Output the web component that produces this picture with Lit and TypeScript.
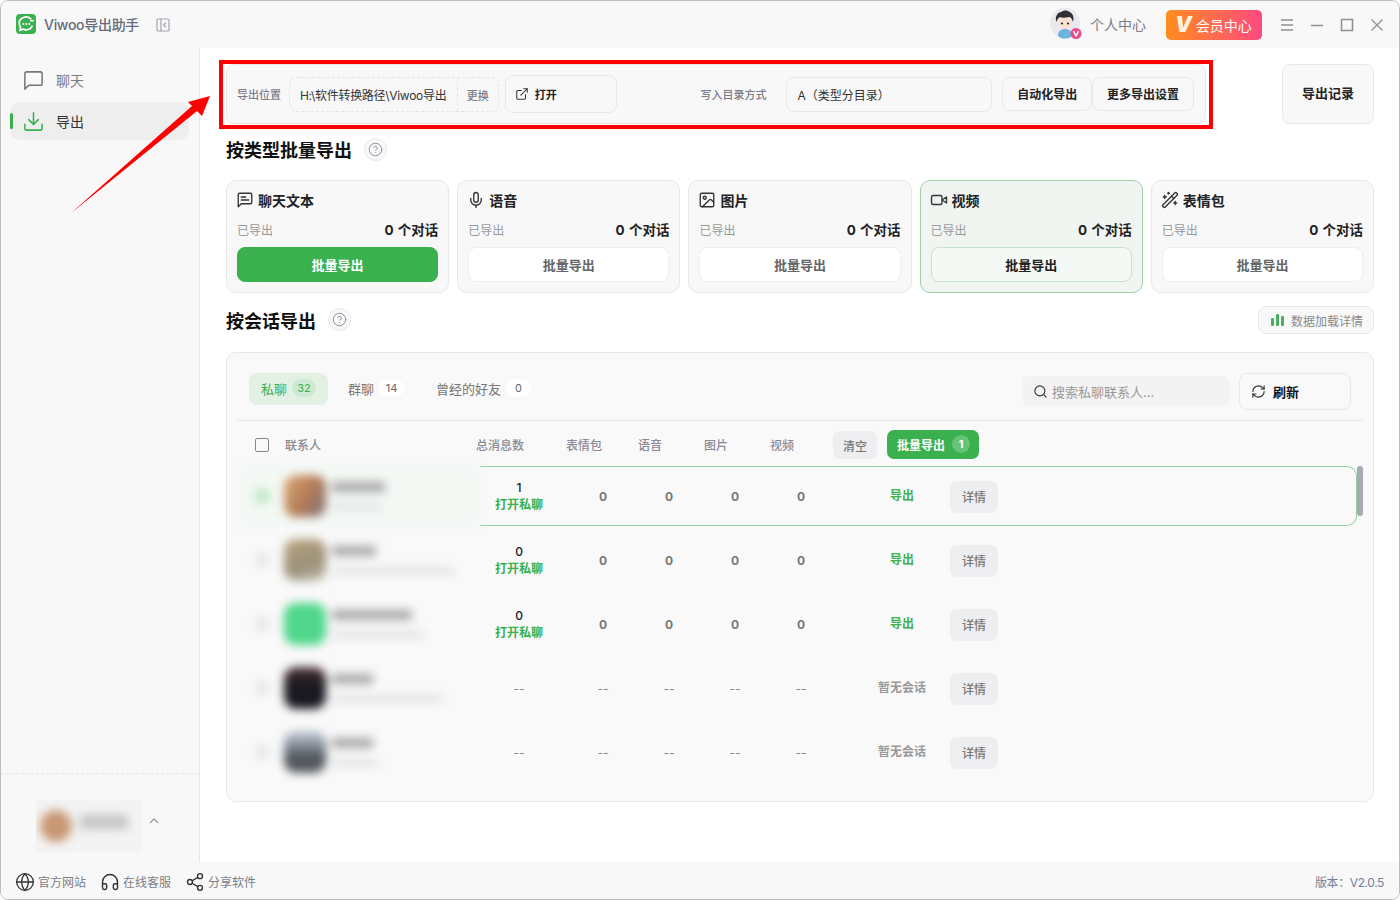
import { LitElement, html, css, svg } from 'lit';
import { customElement } from 'lit/decorators.js';

const icons = {
  chat: svg`<path d="M21 15a2 2 0 0 1-2 2H7l-4 4V5a2 2 0 0 1 2-2h14a2 2 0 0 1 2 2z"/>`,
  download: svg`<path d="M21 15v4a2 2 0 0 1-2 2H5a2 2 0 0 1-2-2v-4"/><path d="m7 10 5 5 5-5"/><path d="M12 15V3"/>`,
  text: svg`<path d="M21 15a2 2 0 0 1-2 2H7l-4 4V5a2 2 0 0 1 2-2h14a2 2 0 0 1 2 2z"/><path d="M13 8H7"/><path d="M17 12H7"/>`,
  mic: svg`<path d="M12 2a3 3 0 0 0-3 3v7a3 3 0 0 0 6 0V5a3 3 0 0 0-3-3Z"/><path d="M19 10v2a7 7 0 0 1-14 0v-2"/><path d="M12 19v3"/>`,
  image: svg`<rect x="3" y="3" width="18" height="18" rx="2"/><circle cx="9" cy="9" r="2"/><path d="m21 15-3.086-3.086a2 2 0 0 0-2.828 0L6 21"/>`,
  video: svg`<path d="m22 8-6 4 6 4V8Z"/><rect x="2" y="6" width="14" height="12" rx="2"/>`,
  wand: svg`<path d="m21.64 3.64-1.28-1.28a1.21 1.21 0 0 0-1.72 0L2.36 18.64a1.21 1.21 0 0 0 0 1.72l1.28 1.28a1.2 1.2 0 0 0 1.72 0L21.64 5.36a1.2 1.2 0 0 0 0-1.72"/><path d="m14 7 3 3"/><path d="M5 6v4"/><path d="M19 14v4"/><path d="M10 2v2"/><path d="M7 8H3"/><path d="M21 16h-4"/><path d="M11 3H9"/>`,
  link: svg`<path d="M15 3h6v6"/><path d="M10 14 21 3"/><path d="M18 13v6a2 2 0 0 1-2 2H5a2 2 0 0 1-2-2V8a2 2 0 0 1 2-2h6"/>`,
  search: svg`<circle cx="11" cy="11" r="8"/><path d="m21 21-4.3-4.3"/>`,
  refresh: svg`<path d="M3 12a9 9 0 0 1 9-9 9.75 9.75 0 0 1 6.74 2.74L21 8"/><path d="M21 3v5h-5"/><path d="M21 12a9 9 0 0 1-9 9 9.75 9.75 0 0 1-6.74-2.74L3 16"/><path d="M8 16H3v5"/>`,
  globe: svg`<circle cx="12" cy="12" r="10"/><path d="M12 2a14.5 14.5 0 0 0 0 20 14.5 14.5 0 0 0 0-20"/><path d="M2 12h20"/>`,
  headphones: svg`<path d="M3 14h3a2 2 0 0 1 2 2v3a2 2 0 0 1-2 2H5a2 2 0 0 1-2-2v-7a9 9 0 0 1 18 0v7a2 2 0 0 1-2 2h-1a2 2 0 0 1-2-2v-3a2 2 0 0 1 2-2h3"/>`,
  share: svg`<circle cx="18" cy="5" r="3"/><circle cx="6" cy="12" r="3"/><circle cx="18" cy="19" r="3"/><path d="m8.59 13.51 6.83 3.98"/><path d="m15.41 6.51-6.82 3.98"/>`,
  help: svg`<circle cx="12" cy="12" r="10"/><path d="M9.09 9a3 3 0 0 1 5.83 1c0 2-3 3-3 3"/><path d="M12 17h.01"/>`,
  collapse: svg`<rect x="3" y="3" width="18" height="18" rx="2"/><path d="M9 3v18"/><path d="m16 15-3-3 3-3"/>`,
};

const ico = (name: keyof typeof icons, size: number, color = 'currentColor', sw = 2) => html`
  <svg class="ico" width=${size} height=${size} viewBox="0 0 24 24" fill="none" stroke=${color}
    stroke-width=${sw} stroke-linecap="round" stroke-linejoin="round">${icons[name]}</svg>
`;

const typeCards = [
  { icon: 'text', name: '聊天文本', state: 'primary' },
  { icon: 'mic', name: '语音', state: '' },
  { icon: 'image', name: '图片', state: '' },
  { icon: 'video', name: '视频', state: 'hover' },
  { icon: 'wand', name: '表情包', state: '' },
] as const;

const contacts = [
  { avatar: 'linear-gradient(120deg,#e0ab78,#b07a55 55%,#7d7480)', name: 53, sub: 48, msgs: '1', has: true, selected: true },
  { avatar: 'linear-gradient(160deg,#b7a57e,#9c9078 60%,#c3c0b4)', name: 44, sub: 122, msgs: '0', has: true },
  { avatar: '#4fd68b', name: 80, sub: 92, msgs: '0', has: true },
  { avatar: 'linear-gradient(180deg,#4a3034,#1a1820 45%)', name: 41, sub: 110, msgs: '--', has: false },
  { avatar: 'linear-gradient(180deg,#c4cede,#4d5358 65%,#5c6064)', name: 41, sub: 46, msgs: '--', has: false },
];

@customElement('app-root')
export class AppRoot extends LitElement {
  static styles = css`
    :host {
      display: block;
      width: 1400px;
      height: 900px;
      font-family: Inter, 'Noto Sans CJK SC', sans-serif;
      background: #fff;
    }
    * { box-sizing: border-box; }
    .ico { display: block; flex: none; }
    .window {
      position: relative;
      width: 1400px;
      height: 900px;
      display: flex;
      flex-direction: column;
      border: 1px solid #bdbdbd;
      border-radius: 8px;
      overflow: hidden;
      background: #fff;
    }

    .titlebar {
      height: 47px;
      flex: none;
      background: #f8f8f9;
      display: flex;
      align-items: center;
      padding: 0 15px;
    }
    .logo {
      width: 20px;
      height: 20px;
      margin-top: -1px;
    }
    .app-name {
      margin-left: 8px;
      font-size: 14px;
      color: #666b78;
      font-weight: 500;
      letter-spacing: -0.3px;
      padding-bottom: 1px;
    }
    .collapse { margin-left: 16px; color: #a3a3af; }
    .spacer { flex: 1; }
    .profile {
      display: flex;
      align-items: center;
      gap: 8px;
      font-size: 14px;
      color: #7d7d85;
      padding-bottom: 1px;
    }
    .avatar { width: 32px; height: 32px; }
    .vip {
      margin-left: 20px;
      width: 96px;
      height: 30px;
      border-radius: 5px;
      background: linear-gradient(90deg, #ff8c1e, #ff4a80);
      color: #fff;
      font-size: 14px;
      display: flex;
      align-items: center;
      padding-left: 9px;
      gap: 4px;
    }
    .vip b {
      font-size: 21px;
      font-style: italic;
      font-weight: 900;
      line-height: 1;
      color: #fff2df;
    }
    .winbtns {
      margin-left: 18px;
      display: flex;
      align-items: center;
      gap: 16px;
      color: #8f8f8f;
    }
    .winbtns svg { display: block; }

    .body { flex: 1; display: flex; min-height: 0; }
    .sidebar {
      width: 199px;
      flex: none;
      background: #f8f8f9;
      border-right: 1px solid #e8e8e8;
      display: flex;
      flex-direction: column;
      padding-top: 12px;
    }
    .nav {
      height: 40px;
      margin: 0 10px 2px 9px;
      display: flex;
      align-items: center;
      gap: 11px;
      padding-left: 12px;
      border-radius: 10px;
      font-size: 14px;
      color: #7b7b85;
      position: relative;
    }
    .nav.on { height: 38px; background: #eeeeee; color: #333; }
    .nav.on::before {
      content: '';
      position: absolute;
      left: 0;
      top: 11px;
      width: 3px;
      height: 16px;
      background: #3ab04f;
      border-radius: 2px;
    }
    .user {
      margin-top: auto;
      border-top: 1px dashed #e6e6e6;
      height: 89px;
      padding: 26px 0 0 35px;
      display: flex;
      gap: 7px;
    }
    .user-blur {
      width: 106px;
      height: 52px;
      overflow: hidden;
      display: flex;
      align-items: center;
      gap: 8px;
      padding-left: 4px;
      background: #f3f3f3;
    }
    .user-blur i {
      display: block;
      filter: blur(5px);
    }
    .user-pic { width: 32px; height: 32px; border-radius: 50%; background: #c99874; }
    .user-name { width: 48px; height: 14px; background: #c4c4c4; margin-top: -8px; }
    .chev { margin-top: 16px; color: #9a9aa6; }

    .main { flex: 1; min-width: 0; padding: 16px 25px 0 26px; }
    .toprow { display: flex; justify-content: space-between; }
    .toolbar {
      width: 980px;
      height: 60px;
      display: flex;
      align-items: center;
      background: #f8f8f9;
      border: 1px solid #e8e8e8;
      border-radius: 8px;
      padding: 0 11px 0 10px;
    }
    .lbl { font-size: 11px; color: #7b7b88; font-weight: 500; white-space: nowrap; }
    .path {
      margin-left: 8px;
      width: 210px;
      height: 35px;
      border: 1px dashed #e4e4e4;
      border-radius: 8px;
      display: flex;
      align-items: center;
      font-size: 12px;
      color: #333;
    }
    .path span:first-child {
      width: 167px;
      padding-left: 10px;
      white-space: nowrap;
      letter-spacing: -0.3px;
    }
    .path .change {
      flex: 1;
      height: 100%;
      border-left: 1px dashed #e4e4e4;
      display: flex;
      align-items: center;
      justify-content: center;
      font-size: 11px;
      font-weight: 500;
      color: #7b7b88;
      padding-top: 2px;
    }
    .open {
      margin-left: 6px;
      width: 112px;
      height: 38px;
      border: 1px solid #e8e8e8;
      border-radius: 8px;
      display: flex;
      align-items: center;
      gap: 6px;
      padding-left: 9px;
      font-size: 11px;
      font-weight: 700;
      color: #222;
    }
    .lbl.write { margin-left: 84px; }
    .select {
      margin-left: 19px;
      width: 207px;
      height: 35px;
      border: 1px solid #e8e8e8;
      border-radius: 8px;
      display: flex;
      align-items: center;
      padding-left: 11px;
      font-size: 12px;
      color: #333;
    }
    .tbtn {
      height: 34px;
      border: 1px solid #e8e8e8;
      border-radius: 8px;
      display: flex;
      align-items: center;
      justify-content: center;
      font-size: 12px;
      font-weight: 700;
      color: #222;
      white-space: nowrap;
      padding-bottom: 2px;
    }
    .tbtn.auto { margin-left: 10px; width: 90px; }
    .tbtn.more { width: 102px; }
    .record {
      width: 92px;
      height: 60px;
      background: #f8f8f9;
      border: 1px solid #e8e8e8;
      border-radius: 8px;
      display: flex;
      align-items: center;
      justify-content: center;
      font-size: 13px;
      font-weight: 700;
      color: #222;
      padding-bottom: 3px;
    }

    .section {
      height: 24px;
      margin-top: 13px;
      margin-bottom: 19px;
      display: flex;
      align-items: center;
      gap: 12px;
      font-size: 18px;
      font-weight: 700;
      color: #111;
    }
    .section.second { height: 28px; margin-top: 13px; margin-bottom: 18px; }
    .section.second .helpbtn { margin-top: -2px; }
    .helpbtn {
      width: 23px;
      height: 23px;
      border-radius: 50%;
      border: 1px solid #e8e8ec;
      background: #f8f8f9;
      display: flex;
      align-items: center;
      justify-content: center;
      color: #8f8fa0;
    }
    .load {
      margin-left: auto;
      width: 116px;
      height: 28px;
      border: 1px solid #e8e8e8;
      border-radius: 8px;
      background: #f8f8f9;
      display: flex;
      align-items: center;
      gap: 7px;
      padding-left: 12px;
      font-size: 12px;
      font-weight: 400;
      color: #888;
      white-space: nowrap;
    }
    .bars { display: flex; align-items: flex-end; gap: 2px; height: 12px; }
    .bars i { display: block; width: 3px; background: #4caf5f; border-radius: 1px; }

    .cards { display: grid; grid-template-columns: repeat(5, 1fr); gap: 8px; }
    .card {
      height: 113px;
      background: #f8f8f9;
      border: 1px solid #e8e8e8;
      border-radius: 10px;
      padding: 10px 10px;
    }
    .card.hover { background: #f0f5f1; border-color: #9dd3a6; }
    .card-title {
      display: flex;
      align-items: center;
      gap: 4px;
      height: 18px;
      font-size: 14px;
      font-weight: 700;
      color: #222;
    }
    .card-title .ico { margin-left: -1px; }
    .card-stat {
      display: flex;
      justify-content: space-between;
      align-items: center;
      height: 18px;
      margin-top: 11px;
      font-size: 12px;
      color: #999;
    }
    .card-stat b { font-size: 13.5px; color: #222; font-weight: 700; word-spacing: 1px; }
    .card-btn {
      margin-top: 9px;
      height: 35px;
      border: 1px solid #eeeeee;
      border-radius: 8px;
      background: #fff;
      display: flex;
      align-items: center;
      justify-content: center;
      font-size: 13px;
      font-weight: 700;
      color: #666;
    }
    .card-btn.primary { background: #3ab04f; border-color: #3ab04f; color: #fff; }
    .card-btn.hover { background: #f4f9f5; border-color: #c5e3ca; color: #222; }

    .panel {
      height: 450px;
      background: #f9f9f9;
      border: 1px solid #e8e8e8;
      border-radius: 10px;
      padding: 20px 10px 0;
    }
    .tabs {
      height: 48px;
      border-bottom: 1px solid #e8e8e8;
      padding: 0 12px 10px;
      display: flex;
      align-items: flex-start;
    }
    .tab {
      height: 32px;
      padding: 0 12px 2px;
      margin-right: 8px;
      display: flex;
      align-items: center;
      gap: 5px;
      border-radius: 8px;
      font-size: 13px;
      color: #777;
    }
    .tab.on { background: #e2f1e4; color: #3ab04f; }
    .count {
      width: 25px;
      height: 18px;
      border-radius: 9px;
      background: #fff;
      color: #666;
      font-size: 11px;
      display: flex;
      align-items: center;
      justify-content: center;
    }
    .tab.on .count { width: 24px; background: #cfe9d3; color: #3ab04f; }
    .search {
      margin-left: auto;
      margin-top: 3px;
      width: 208px;
      height: 30px;
      background: #f3f3f4;
      border-radius: 8px;
      display: flex;
      align-items: center;
      gap: 4px;
      padding-left: 11px;
      font-size: 13px;
      color: #999;
    }
    .refresh {
      margin-left: 9px;
      width: 112px;
      height: 37px;
      border: 1px solid #e8e8e8;
      border-radius: 8px;
      display: flex;
      align-items: center;
      gap: 7px;
      padding-left: 11px;
      font-size: 13px;
      font-weight: 700;
      color: #111;
    }

    .thead {
      height: 45px;
      padding-top: 2px;
      display: grid;
      grid-template-columns: 224px 78px 12px repeat(4, 66px) 1fr;
      align-items: center;
      font-size: 12px;
      font-weight: 500;
      color: #8a8a96;
      text-align: center;
    }
    .thead .who { display: flex; align-items: center; gap: 16px; padding-left: 18px; }
    .check { width: 14px; height: 14px; border: 1.5px solid #85858f; border-radius: 2px; }
    .bulk-actions { display: flex; align-items: center; gap: 10px; margin-left: 18px; }
    .clear {
      width: 44px;
      height: 28px;
      margin-top: 1px;
      border-radius: 7px;
      background: #eeeef0;
      display: flex;
      align-items: center;
      justify-content: center;
      color: #777;
    }
    .bulk {
      width: 92px;
      height: 29px;
      margin-top: -1px;
      border-radius: 7px;
      background: #3ab04f;
      color: #fff;
      font-weight: 700;
      display: flex;
      align-items: center;
      gap: 7px;
      padding-left: 10px;
    }
    .bulk i {
      width: 18px;
      height: 18px;
      border-radius: 50%;
      background: #66c377;
      font-style: normal;
      font-size: 11px;
      display: flex;
      align-items: center;
      justify-content: center;
    }

    .rows {
      position: relative;
      display: flex;
      flex-direction: column;
      gap: 4px;
    }
    .thumb {
      position: absolute;
      left: 1120px;
      top: 0;
      width: 6px;
      height: 50px;
      border-radius: 3px;
      background: #a9a9b6;
    }
    .row { display: flex; width: 1120px; height: 60px; }
    .contact {
      width: 243px;
      flex: none;
      display: flex;
      align-items: center;
      overflow: hidden;
      filter: blur(5px);
    }
    .row.sel .contact { background: #f3f8f4; }
    .tick {
      width: 14px;
      height: 14px;
      margin-left: 18px;
      border-radius: 3px;
      background: #e8e8ec;
    }
    .row.sel .tick { background: #bfe6c6; }
    .face { width: 42px; height: 42px; margin-left: 15px; border-radius: 12px; flex: none; }
    .lines { margin-left: 6px; display: flex; flex-direction: column; gap: 12px; }
    .lines i { display: block; height: 10px; background: #a8a8a8; }
    .lines i + i { height: 6px; background: #dedee0; }
    .stats {
      flex: 1;
      display: grid;
      grid-template-columns: 78px 12px repeat(4, 66px) 44px 48px 24px 48px;
      align-items: center;
      text-align: center;
      font-size: 12px;
      font-weight: 700;
      color: #777;
      border: 1px solid transparent;
      border-left: 0;
      border-radius: 0 10px 10px 0;
    }
    .row.sel .stats { border-color: #93d19f; }
    .msgs { grid-column: 1; line-height: 17px; font-weight: 500; color: #222; margin-top: -1px; }
    .msgs span { display: block; color: #3ab04f; font-weight: 700; }
    .msgs.none { color: #888; font-weight: 400; margin-top: 0; }
    .num { font-weight: 700; }
    .num.none { color: #888; font-weight: 400; }
    .act { grid-column: 8; color: #3ab04f; white-space: nowrap; margin-top: -3px; }
    .act.none { color: #999; }
    .detail {
      grid-column: 10;
      height: 32px;
      margin-top: 1px;
      border-radius: 7px;
      background: #eeeef0;
      color: #777;
      display: flex;
      align-items: center;
      justify-content: center;
      font-weight: 500;
    }

    .footer {
      height: 37px;
      flex: none;
      background: #f8f8f9;
      display: flex;
      align-items: center;
      padding: 2px 15px 0 14px;
      font-size: 12px;
      color: #7d7d85;
    }
    .flink { display: flex; align-items: center; gap: 3px; margin-right: 14px; }
    .version { margin-left: auto; color: #72809a; letter-spacing: -0.4px; }

    .mark {
      position: absolute;
      left: 218px;
      top: 59px;
      width: 994px;
      height: 69px;
      border: 4px solid #ff0000;
      pointer-events: none;
    }
    .arrow { position: absolute; left: -1px; top: -1px; pointer-events: none; }
  `;

  renderCard(c: (typeof typeCards)[number]) {
    return html`
      <div class="card ${c.state === 'hover' ? 'hover' : ''}">
        <div class="card-title">${ico(c.icon, 18, '#333', 1.8)}${c.name}</div>
        <div class="card-stat"><span>已导出</span><b>0 个对话</b></div>
        <div class="card-btn ${c.state}">批量导出</div>
      </div>
    `;
  }

  renderRow(c: (typeof contacts)[number]) {
    const numCls = c.has ? 'num' : 'num none';
    const val = c.has ? '0' : '--';
    return html`
      <div class="row ${c.selected ? 'sel' : ''}">
        <div class="contact">
          <div class="tick"></div>
          <div class="face" style="background:${c.avatar}"></div>
          <div class="lines">
            <i style="width:${c.name}px"></i>
            <i style="width:${c.sub}px"></i>
          </div>
        </div>
        <div class="stats">
          <div class="msgs ${c.has ? '' : 'none'}">${c.msgs}${c.has ? html`<span>打开私聊</span>` : ''}</div>
          <div class=${numCls} style="grid-column:3">${val}</div>
          <div class=${numCls}>${val}</div>
          <div class=${numCls}>${val}</div>
          <div class=${numCls}>${val}</div>
          <div class="act ${c.has ? '' : 'none'}">${c.has ? '导出' : '暂无会话'}</div>
          <div class="detail">详情</div>
        </div>
      </div>
    `;
  }

  render() {
    return html`
      <div class="window">
        <div class="titlebar">
          <svg class="logo" viewBox="0 0 20 20">
            <rect width="20" height="20" rx="4" fill="#3ab04f"/>
            <path d="M15.300 5.600A6.600 6 0 0 0 3.400 10c0 1.300.4 2.400 1.100 3.300L4 16.200l2.900-1.100c.9.400 2 .7 3.100.7 3 0 5.500-1.700 6.300-4.300" fill="none" stroke="#fff" stroke-width="1.700"/>
            <path d="M14.200 6.800h3.600" stroke="#fff" stroke-width="1.500"/>
            <circle cx="7.300" cy="10" r="1" fill="#fff"/>
            <circle cx="10.300" cy="10" r="1" fill="#fff"/>
            <circle cx="13.300" cy="10" r="1" fill="#fff"/>
          </svg>
          <span class="app-name">Viwoo导出助手</span>
          <span class="collapse">${ico('collapse', 16, 'currentColor', 1.8)}</span>
          <span class="spacer"></span>
          <div class="profile">
            <svg class="avatar" viewBox="0 0 32 32">
              <circle cx="15" cy="15" r="15" fill="#e9e9ee"/>
              <path d="M8 28c0-5 3-7 7-7s7 2 7 7c-2 2-4 2.500-7 2.500S10 30 8 28z" fill="#6db4dc"/>
              <circle cx="15" cy="14" r="7" fill="#fbe3d3"/>
              <path d="M6.500 14c-2-5 1-10 5-10 2-2 6-2 8 0 3 1 5 5 3.500 10-1-3-2-5-4-5-3 1-7 1-9 0-2 1-3 3-3.500 5z" fill="#2f3038"/>
              <circle cx="12" cy="15.500" r="1.100" fill="#222"/>
              <circle cx="18" cy="15.500" r="1.100" fill="#222"/>
              <circle cx="26" cy="25.500" r="5.500" fill="#ea4c89"/>
              <path d="M23.500 23.200l2.500 4.800 2.500-4.800" fill="none" stroke="#fff" stroke-width="1.500"/>
            </svg>
            个人中心
          </div>
          <div class="vip"><b>V</b>会员中心</div>
          <div class="winbtns">
            <svg width="14" height="14" viewBox="0 0 14 14" stroke="currentColor" stroke-width="1.300"><path d="M1 2h12M1 7h12M1 12h12"/></svg>
            <svg width="14" height="14" viewBox="0 0 14 14" stroke="currentColor" stroke-width="1.300"><path d="M1 7.500h12"/></svg>
            <svg width="14" height="14" viewBox="0 0 14 14" stroke="currentColor" stroke-width="1.500" fill="none"><rect x="1.500" y="1.500" width="11" height="11"/></svg>
            <svg width="14" height="14" viewBox="0 0 14 14" stroke="currentColor" stroke-width="1.300"><path d="M1.500 1.500l11 11M12.500 1.500l-11 11"/></svg>
          </div>
        </div>

        <div class="body">
          <aside class="sidebar">
            <div class="nav">${ico('chat', 23, '#777', 1.6)}聊天</div>
            <div class="nav on">${ico('download', 23, '#3ab04f', 1.6)}导出</div>
            <div class="user">
              <div class="user-blur"><i class="user-pic"></i><i class="user-name"></i></div>
              <svg class="chev" width="10" height="10" viewBox="0 0 10 10" fill="none" stroke="currentColor" stroke-width="1.300"><path d="M1 7l4-4 4 4"/></svg>
            </div>
          </aside>

          <main class="main">
            <div class="toprow">
              <div class="toolbar">
                <span class="lbl">导出位置</span>
                <div class="path">
                  <span>H:\\软件转换路径\\Viwoo导出</span>
                  <span class="change">更换</span>
                </div>
                <div class="open">${ico('link', 14, '#333', 1.8)}打开</div>
                <span class="lbl write">写入目录方式</span>
                <div class="select">A（类型分目录）</div>
                <div class="tbtn auto">自动化导出</div>
                <div class="tbtn more">更多导出设置</div>
              </div>
              <div class="record">导出记录</div>
            </div>

            <div class="section">
              按类型批量导出
              <span class="helpbtn">${ico('help', 15, 'currentColor', 1.6)}</span>
            </div>
            <div class="cards">${typeCards.map((c) => this.renderCard(c))}</div>

            <div class="section second">
              按会话导出
              <span class="helpbtn">${ico('help', 15, 'currentColor', 1.6)}</span>
              <div class="load">
                <span class="bars">
                  <i style="height:8px"></i><i style="height:12px"></i><i style="height:10px"></i>
                </span>
                数据加载详情
              </div>
            </div>

            <div class="panel">
              <div class="tabs">
                <div class="tab on">私聊<span class="count">32</span></div>
                <div class="tab">群聊<span class="count">14</span></div>
                <div class="tab">曾经的好友<span class="count">0</span></div>
                <div class="search">${ico('search', 15, '#333', 1.8)}搜索私聊联系人...</div>
                <div class="refresh">${ico('refresh', 15, '#333', 1.8)}刷新</div>
              </div>
              <div class="thead">
                <div class="who"><span class="check"></span>联系人</div>
                <div>总消息数</div>
                <div></div>
                <div>表情包</div>
                <div>语音</div>
                <div>图片</div>
                <div>视频</div>
                <div class="bulk-actions">
                  <div class="clear">清空</div>
                  <div class="bulk">批量导出<i>1</i></div>
                </div>
              </div>
              <div class="rows">
                ${contacts.map((c) => this.renderRow(c))}
                <div class="thumb"></div>
              </div>
            </div>
          </main>
        </div>

        <div class="footer">
          <div class="flink">${ico('globe', 20, '#333', 1.6)}官方网站</div>
          <div class="flink">${ico('headphones', 20, '#333', 1.7)}在线客服</div>
          <div class="flink">${ico('share', 20, '#333', 1.6)}分享软件</div>
          <span class="version">版本：V2.0.5</span>
        </div>

        <div class="mark"></div>
        <svg class="arrow" width="260" height="240" viewBox="0 0 260 240">
          <polygon points="70,214 192,106 188,102 210,96 202,116 197,111" fill="#ff0000"/>
        </svg>
      </div>
    `;
  }
}
